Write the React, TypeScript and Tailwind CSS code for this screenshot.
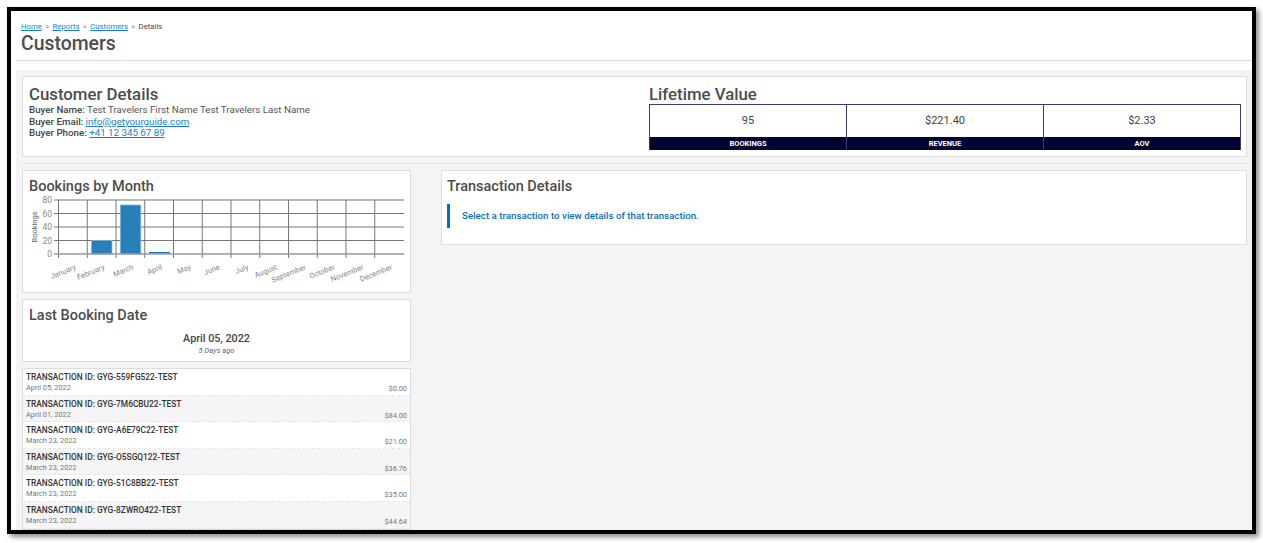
const months = [
	"January",
	"February",
	"March",
	"April",
	"May",
	"June",
	"July",
	"August",
	"September",
	"October",
	"November",
	"December",
];

const bars = [
	{ x: 91.5, y: 240.5, h: 13.5 },
	{ x: 120.3, y: 205, h: 49 },
];

const transactions = [
	{ id: "GYG-559FG522-TEST", date: "April 05, 2022", amount: "$0.00" },
	{ id: "GYG-7M6CBU22-TEST", date: "April 01, 2022", amount: "$84.00" },
	{ id: "GYG-A6E79C22-TEST", date: "March 23, 2022", amount: "$21.00" },
	{ id: "GYG-O5SGQ122-TEST", date: "March 23, 2022", amount: "$36.76" },
	{ id: "GYG-51C8BB22-TEST", date: "March 23, 2022", amount: "$35.00" },
	{ id: "GYG-8ZWRO422-TEST", date: "March 23, 2022", amount: "$44.64" },
];

function BookingsChart() {
	return (
		<svg width="387" height="97" viewBox="23 195 387 97" className="block">
			{[200, 213.5, 227, 240.5].map((y) => (
				<line key={y} x1="54" x2="404" y1={y} y2={y} stroke="#777" strokeWidth="1" />
			))}
			{months.map((_, i) => (
				<line
					key={i}
					x1={58.5 + i * 28.75}
					x2={58.5 + i * 28.75}
					y1="200"
					y2="258"
					stroke="#777"
					strokeWidth="1"
				/>
			))}
			{bars.map((b) => (
				<rect
					key={b.x}
					x={b.x}
					y={b.y}
					width="20.5"
					height={b.h}
					fill="#2980b9"
					stroke="#7fb8dc"
					strokeWidth="0.8"
				/>
			))}
			<rect x="149" y="252" width="21" height="1.4" fill="#1f6fa8" />
			<line x1="54" x2="404" y1="254" y2="254" stroke="#999" strokeWidth="1.5" />
			{[80, 60, 40, 20, 0].map((v, i) => (
				<text
					key={v}
					x="52"
					y={203 + i * 13.5}
					textAnchor="end"
					fontSize="8.5"
					fill="#888"
					fontFamily="Roboto, sans-serif"
				>
					{v}
				</text>
			))}
			<text
				transform="translate(37 227) rotate(-90)"
				textAnchor="middle"
				fontSize="7.5"
				fill="#666"
				fontFamily="Roboto, sans-serif"
			>
				Bookings
			</text>
			{months.map((m, i) => (
				<text
					key={m}
					transform={`translate(${76.5 + i * 28.75} 269) rotate(-22)`}
					textAnchor="end"
					fontSize="7.5"
					fill="#888"
					fontFamily="Roboto, sans-serif"
				>
					{m}
				</text>
			))}
		</svg>
	);
}

function Stat({ value, label }: { value: string; label: string }) {
	return (
		<div className="flex flex-1 flex-col">
			<div className="flex h-[32px] items-center justify-center text-[11px] text-[#444]">
				{value}
			</div>
			<div className="flex h-[13px] items-center justify-center bg-[#020230] text-[7.5px] font-bold text-white">
				{label}
			</div>
		</div>
	);
}

function TransactionRow({
	id,
	date,
	amount,
	striped,
}: {
	id: string;
	date: string;
	amount: string;
	striped: boolean;
}) {
	return (
		<div
			className={`flex h-[26.6px] shrink-0 flex-col border-b border-dashed border-[#e6e6e6] px-[3px] pt-[3px] ${striped ? "bg-[#f5f5f7]" : "bg-white"}`}
		>
			<div className="text-[8.35px] leading-[11px] font-medium text-[#333]">
				TRANSACTION ID: {id}
			</div>
			<div className="flex justify-between text-[7.35px] leading-[9px] text-[#777]">
				<span>{date}</span>
				<span className="pt-[1px]">{amount}</span>
			</div>
		</div>
	);
}

export default function App() {
	return (
		<div className="h-[543px] w-[1263px] overflow-hidden bg-white pt-[7px] pl-[7px] font-['Roboto',sans-serif]">
			<div className="flex h-[527px] w-[1249px] flex-col overflow-hidden border-4 border-black bg-white shadow-[3px_3px_5px_rgba(0,0,0,0.45)]">
				<div className="ml-[5px] h-[50px] shrink-0 border-b border-[#ddd] pt-[10px] pl-[5px]">
					<div className="flex items-center gap-[3.3px] text-[7.75px] leading-[11px] text-[#444]">
						<a className="text-[#1a7fc9] underline">Home</a>
						<span className="text-[#888]">&gt;</span>
						<a className="text-[#1a7fc9] underline">Reports</a>
						<span className="text-[#888]">&gt;</span>
						<a className="text-[#1a7fc9] underline">Customers</a>
						<span className="text-[#888]">&gt;</span>
						<span>Details</span>
					</div>
					<h1 className="pt-[1px] text-[19.4px] leading-[22px] font-medium text-[#4d4d4d]">
						Customers
					</h1>
				</div>
				<div className="mt-[9px] ml-[5px] flex min-h-0 flex-1 flex-col bg-[#f4f4f4] pt-[6px] pr-[5px] pl-[6px]">
					<div className="flex h-[81px] shrink-0 border border-[#ddd] bg-white">
						<div className="w-[626px] pt-[7px] pl-[6px]">
							<h2 className="text-[16.8px] leading-[20px] font-medium text-[#4d4d4d]">
								Customer Details
							</h2>
							<div className="text-[9.75px] leading-[11.7px] text-[#555]">
								<div>
									<b className="font-medium text-[#444]">Buyer Name:</b> Test Travelers First
									Name Test Travelers Last Name
								</div>
								<div>
									<b className="font-medium text-[#444]">Buyer Email:</b>{" "}
									<a className="text-[#1a7fc9] underline">info@getyourguide.com</a>
								</div>
								<div>
									<b className="font-medium text-[#444]">Buyer Phone:</b>{" "}
									<a className="text-[#1a7fc9] underline">+41 12 345 67 89</a>
								</div>
							</div>
						</div>
						<div className="w-[592px] pt-[7px]">
							<h2 className="text-[16.8px] leading-[20px] font-medium text-[#4d4d4d]">
								Lifetime Value
							</h2>
							<div className="flex divide-x divide-[#3a3a6e] border-x border-t border-[#3a3a6e]">
								<Stat value="95" label="BOOKINGS" />
								<Stat value="$221.40" label="REVENUE" />
								<Stat value="$2.33" label="AOV" />
							</div>
						</div>
					</div>
					<div className="mt-[6px] h-px shrink-0 bg-[#e2e2e2]" />
					<div className="mt-[6px] flex min-h-0 flex-1 gap-[30px]">
						<div className="flex w-[389px] shrink-0 flex-col gap-[6px]">
							<div className="h-[123px] shrink-0 border border-[#ddd] bg-white">
								<h3 className="pt-[7px] pl-[6px] text-[14.5px] leading-[17px] font-medium text-[#4d4d4d]">
									Bookings by Month
								</h3>
								<BookingsChart />
							</div>
							<div className="h-[63px] shrink-0 border border-[#ddd] bg-white">
								<h3 className="pt-[7px] pl-[6px] text-[14.5px] leading-[17px] font-medium text-[#4d4d4d]">
									Last Booking Date
								</h3>
								<div className="mt-[8px] text-center text-[10.75px] leading-[14px] font-medium text-[#444]">
									April 05, 2022
								</div>
								<div className="text-center text-[7.5px] leading-[10px] text-[#666] italic">
									5 Days ago
								</div>
							</div>
							<div className="flex min-h-0 flex-1 flex-col overflow-hidden border border-[#ddd] bg-white">
								{transactions.map((t, i) => (
									<TransactionRow key={t.id} {...t} striped={i % 2 === 1} />
								))}
							</div>
						</div>
						<div className="flex-1">
							<div className="h-[75px] border border-[#ddd] bg-white pt-[7px] pl-[5px]">
								<h3 className="text-[14.5px] leading-[17px] font-medium text-[#4d4d4d]">
									Transaction Details
								</h3>
								<div className="mt-[9px] flex h-[24px] items-center border-l-[3px] border-[#0b6fb8] pt-[1px] pl-[12px] text-[9.75px] font-medium text-[#0b6fb8]">
									Select a transaction to view details of that transaction.
								</div>
							</div>
						</div>
					</div>
				</div>
			</div>
		</div>
	);
}
